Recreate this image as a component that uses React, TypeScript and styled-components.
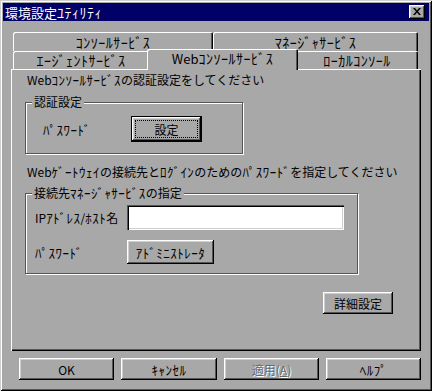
import React from "react";
import styled, { createGlobalStyle } from "styled-components";

const FACE = "#a8a8a8";
const SHADOW = "#555555";
const LIGHT = "#cfcfcf";
const NAVY = "#000066";
const FONT = `"Noto Sans CJK JP", "Noto Sans", sans-serif`;

const Global = createGlobalStyle`
  html, body { margin: 0; padding: 0; background: ${FACE}; }
  body { font-family: ${FONT}; font-size: 12px; color: #000; }
  * { box-sizing: border-box; }
`;

/* Half-width katakana run: the original bitmap font draws them larger */
const Kana = styled.span`
  font-size: 1.08em;
  letter-spacing: 0.5px;
`;

const J = ({ children }: { children: string }) => {
  const parts = children.split(/([\uFF61-\uFF9F]+)/);
  return (
    <>
      {parts.map((p, i) => (i % 2 ? <Kana key={i}>{p}</Kana> : p))}
    </>
  );
};

const Window = styled.div`
  width: 432px;
  height: 391px;
  background: ${FACE};
  padding: 3px;
  display: flex;
  flex-direction: column;
  box-shadow: inset 1px 1px 0 ${LIGHT}, inset -1px -1px 0 #000,
    inset 2px 2px 0 #fff, inset -2px -2px 0 ${SHADOW};
`;

const TitleBar = styled.div`
  height: 18px;
  background: ${NAVY};
  color: #fff;
  display: flex;
  align-items: center;
  justify-content: space-between;
  padding: 0 4px 0 2px;
`;

const TitleText = styled.span`
  font-size: 13px;
  line-height: 18px;
  white-space: nowrap;
`;

const CloseButton = styled.div`
  width: 16px;
  height: 14px;
  background: ${FACE};
  display: flex;
  align-items: center;
  justify-content: center;
  padding-bottom: 1px;
  box-shadow: inset -1px -1px 0 #000, inset 1px 1px 0 #fff,
    inset -2px -2px 0 ${SHADOW}, inset 2px 2px 0 ${LIGHT};
`;

const Body = styled.div`
  flex: 1;
  display: flex;
  flex-direction: column;
  padding: 11px 8px 0 8px;
`;

const TabStrip = styled.div`
  display: flex;
  flex-direction: column;
  padding: 0 2px;
`;

const TabRow = styled.div<{ $h: number }>`
  display: flex;
  align-items: flex-start;
  height: ${(p) => p.$h}px;
`;

const Tab = styled.div<{ $w: number; $h: number; $active?: boolean }>`
  width: ${(p) => p.$w + (p.$active ? 4 : 0)}px;
  height: ${(p) => p.$h}px;
  margin: ${(p) => (p.$active ? "-2px -2px 0 -2px" : "0")};
  position: relative;
  z-index: ${(p) => (p.$active ? 2 : 1)};
  background: ${FACE};
  display: flex;
  align-items: center;
  justify-content: center;
  padding-bottom: ${(p) => (p.$active ? 3 : 0)}px;
  border-radius: 2px 2px 0 0;
  white-space: nowrap;
  font-size: 13px;
  box-shadow: inset 1px 1px 0 #fff, inset -1px 0 0 #000,
    inset -2px 0 0 ${SHADOW};
`;

const Panel = styled.div`
  height: 282px;
  background: ${FACE};
  display: flex;
  flex-direction: column;
  padding: 4px 0 0 14px;
  box-shadow: inset 1px 1px 0 #fff, inset -1px -1px 0 #000,
    inset -2px -2px 0 ${SHADOW};
`;

const Line = styled.div<{ $mt: number }>`
  margin-top: ${(p) => p.$mt}px;
  margin-left: 2px;
  line-height: 14px;
  height: 14px;
  white-space: nowrap;
`;

const Group = styled.div<{ $w: number; $h: number; $mt: number }>`
  position: relative;
  margin-top: ${(p) => p.$mt}px;
  width: ${(p) => p.$w}px;
  height: ${(p) => p.$h}px;
  border: 1px solid ${SHADOW};
  box-shadow: inset 1px 1px 0 #fff, 1px 1px 0 #fff;
  display: flex;
  flex-direction: column;
`;

const GroupLabel = styled.span`
  position: absolute;
  top: -8px;
  left: 6px;
  padding: 0 2px;
  line-height: 14px;
  background: ${FACE};
  white-space: nowrap;
`;

const FieldRow = styled.div<{ $pt: number; $pl: number }>`
  display: flex;
  align-items: center;
  padding: ${(p) => p.$pt}px 0 0 ${(p) => p.$pl}px;
`;

const FieldLabel = styled.span<{ $w: number }>`
  width: ${(p) => p.$w}px;
  white-space: nowrap;
`;

const Button = styled.button<{ $w: number; $h: number }>`
  width: ${(p) => p.$w}px;
  height: ${(p) => p.$h}px;
  padding: 0;
  border: none;
  background: ${FACE};
  font: inherit;
  color: #000;
  display: flex;
  align-items: center;
  justify-content: center;
  white-space: nowrap;
  box-shadow: inset -1px -1px 0 #000, inset 1px 1px 0 #fff,
    inset -2px -2px 0 ${SHADOW}, inset 2px 2px 0 ${LIGHT};
`;

const DefaultButton = styled(Button)`
  border: 1px solid #000;
  padding: 3px;
`;

const FocusRing = styled.span`
  flex: 1;
  align-self: stretch;
  display: flex;
  align-items: center;
  justify-content: center;
  border: 1px dotted #000;
`;

const DisabledText = styled.span`
  color: #6a6a6a;
  text-shadow: 1px 1px 0 #fff;
`;

const TextInput = styled.div<{ $w: number; $h: number }>`
  width: ${(p) => p.$w}px;
  height: ${(p) => p.$h}px;
  background: #fff;
  box-shadow: inset 1px 1px 0 ${SHADOW}, inset 2px 2px 0 #000,
    inset -1px -1px 0 #fff, inset -2px -2px 0 ${LIGHT};
`;

const DetailRow = styled.div`
  display: flex;
  justify-content: flex-end;
  margin: 18px 28px 0 0;
`;

const ButtonRow = styled.div`
  display: flex;
  gap: 7px;
  margin: 7px 0 0 8px;
`;

const CloseIcon = () => (
  <svg width="8" height="7" viewBox="0 0 8 7">
    <path d="M0 0h2l2 2.5L6 0h2L5 3.5 8 7H6L4 4.5 2 7H0l3-3.5z" fill="#000" />
  </svg>
);

export default function App() {
  return (
    <>
      <Global />
      <Window>
        <TitleBar>
          <TitleText>
            <J>環境設定ﾕﾃｨﾘﾃｨ</J>
          </TitleText>
          <CloseButton>
            <CloseIcon />
          </CloseButton>
        </TitleBar>
        <Body>
          <TabStrip>
            <TabRow $h={19}>
              <Tab $w={200} $h={19}>
                <J>ｺﾝｿｰﾙｻｰﾋﾞｽ</J>
              </Tab>
              <Tab $w={205} $h={19}>
                <J>ﾏﾈｰｼﾞｬｻｰﾋﾞｽ</J>
              </Tab>
            </TabRow>
            <TabRow $h={18}>
              <Tab $w={136} $h={18}>
                <J>ｴｰｼﾞｪﾝﾄｻｰﾋﾞｽ</J>
              </Tab>
              <Tab $w={147} $h={21} $active>
                <J>Webｺﾝｿｰﾙｻｰﾋﾞｽ</J>
              </Tab>
              <Tab $w={122} $h={18}>
                <J>ﾛｰｶﾙｺﾝｿｰﾙ</J>
              </Tab>
            </TabRow>
          </TabStrip>
          <Panel>
            <Line $mt={0}>
              <J>Webｺﾝｿｰﾙｻｰﾋﾞｽの認証設定をしてください</J>
            </Line>
            <Group $w={218} $h={52} $mt={15}>
              <GroupLabel>認証設定</GroupLabel>
              <FieldRow $pt={13} $pl={17}>
                <FieldLabel $w={88}>
                  <J>ﾊﾟｽﾜｰﾄﾞ</J>
                </FieldLabel>
                <DefaultButton $w={71} $h={26}>
                  <FocusRing>設定</FocusRing>
                </DefaultButton>
              </FieldRow>
            </Group>
            <Line $mt={11}>
              <J>Webｹﾞｰﾄｳｪｲの接続先とﾛｸﾞｲﾝのためのﾊﾟｽﾜｰﾄﾞを指定してください</J>
            </Line>
            <Group $w={333} $h={81} $mt={14}>
              <GroupLabel>
                <J>接続先ﾏﾈｰｼﾞｬｻｰﾋﾞｽの指定</J>
              </GroupLabel>
              <FieldRow $pt={11} $pl={9}>
                <FieldLabel $w={92}>
                  <J>IPｱﾄﾞﾚｽ/ﾎｽﾄ名</J>
                </FieldLabel>
                <TextInput $w={217} $h={25} />
              </FieldRow>
              <FieldRow $pt={10} $pl={9}>
                <FieldLabel $w={92}>
                  <J>ﾊﾟｽﾜｰﾄﾞ</J>
                </FieldLabel>
                <Button $w={87} $h={24}>
                  <J>ｱﾄﾞﾐﾆｽﾄﾚｰﾀ</J>
                </Button>
              </FieldRow>
            </Group>
            <DetailRow>
              <Button $w={70} $h={22}>詳細設定</Button>
            </DetailRow>
          </Panel>
          <ButtonRow>
            <Button $w={95} $h={22}>OK</Button>
            <Button $w={96} $h={22}>
              <J>ｷｬﾝｾﾙ</J>
            </Button>
            <Button $w={95} $h={22} disabled>
              <DisabledText>
                適用(<u>A</u>)
              </DisabledText>
            </Button>
            <Button $w={95} $h={22}>
              <J>ﾍﾙﾌﾟ</J>
            </Button>
          </ButtonRow>
        </Body>
      </Window>
    </>
  );
}
